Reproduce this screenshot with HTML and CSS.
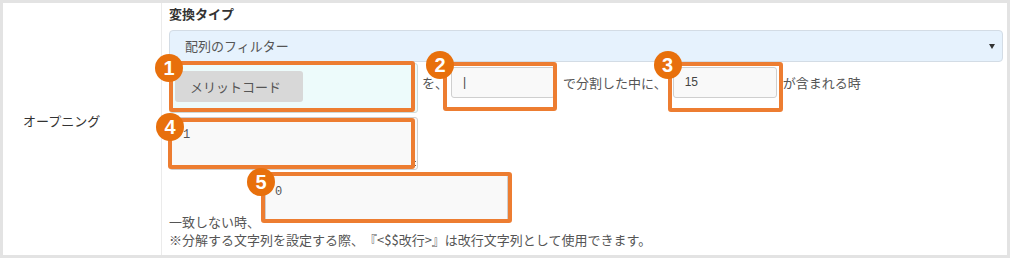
FILE: index.html
```html
<!DOCTYPE html>
<html lang="ja">
<head>
<meta charset="utf-8">
<title>変換タイプ</title>
<link rel="stylesheet" href="styles.css">
</head>
<body>
<div class="frame">
  <div class="label-cell"><span>オープニング</span></div>
  <div class="content">
    <div class="title">変換タイプ</div>
    <div class="select"><span>配列のフィルター</span><span class="caret"></span></div>
    <div class="row1">
      <div class="field f1">
        <div class="tagbox"><span class="tag">メリットコード</span></div>
        <span class="mark m1"><span class="badge b1">1</span></span>
      </div>
      <span class="txt t-wo">を、</span>
      <div class="field f2">
        <div class="inp">|</div>
        <span class="mark m2"><span class="badge b2">2</span></span>
      </div>
      <span class="txt t-split">で分割した中に、</span>
      <div class="field f3">
        <div class="inp">15</div>
        <span class="mark m3"><span class="badge b3">3</span></span>
      </div>
      <span class="txt t-inc">が含まれる時</span>
    </div>
    <div class="field f4">
      <textarea class="ta">1</textarea>
      <span class="mark m4"><span class="badge b4">4</span></span>
    </div>
    <div class="row3">
      <span class="txt">一致しない時、</span>
      <div class="field f5">
        <div class="ta5">0</div>
        <span class="mark m5"><span class="badge b5">5</span></span>
      </div>
    </div>
    <div class="note">※分解する文字列を設定する際、『&lt;$$改行&gt;』は改行文字列として使用できます。</div>
  </div>
</div>
</body>
</html>
```

FILE: styles.css
```css
html, body {
  margin: 0;
  padding: 0;
  background: #fff;
}

.frame {
  width: 1010px;
  height: 258px;
  box-sizing: border-box;
  border: 3px solid #e3e3e3;
  display: flex;
  font-family: "Noto Sans CJK JP", sans-serif;
  font-size: 13px;
  color: #555;
  background: #fff;
  text-spacing-trim: space-all;
  font-feature-settings: "chws" 0, "halt" 0, "palt" 0;
}

.label-cell {
  width: 159px;
  flex: none;
  box-sizing: border-box;
  border-right: 1px solid #ebebeb;
  display: flex;
  align-items: center;
  padding: 0 0 16px 20px;
  color: #333;
  line-height: 18px;
}

.content {
  flex: 1;
  padding: 2px 4px 0 7px;
  display: flex;
  flex-direction: column;
  align-items: flex-start;
}

.title {
  font-weight: bold;
  color: #333;
  line-height: 18px;
}

.select {
  margin-top: 7px;
  align-self: stretch;
  height: 32px;
  box-sizing: border-box;
  border: 1px solid #d3dce5;
  border-radius: 4px;
  background: #e6f2fd;
  display: flex;
  align-items: center;
  justify-content: space-between;
  padding: 0 7px 0 15px;
  line-height: 18px;
}

.caret {
  width: 0;
  height: 0;
  border-left: 3px solid transparent;
  border-right: 3px solid transparent;
  border-top: 5px solid #333;
}

.field {
  position: relative;
  flex: none;
}

.row1 {
  display: flex;
  align-items: flex-start;
  margin-top: 1px;
}

.f1 {
  width: 249px;
  height: 50px;
}

.tagbox {
  width: 100%;
  height: 100%;
  box-sizing: border-box;
  border: 1px solid #cddada;
  border-radius: 3px;
  background: #edfbfb;
  padding: 7px 0 0 5px;
}

.tag {
  display: block;
  width: 128px;
  height: 31px;
  box-sizing: border-box;
  background: #d8d8d8;
  border-radius: 3px;
  padding-left: 15px;
  line-height: 31px;
  color: #555;
}

.txt {
  line-height: 18px;
  white-space: nowrap;
}

.row1 .txt {
  margin-top: 11px;
}

.t-wo { margin-left: 4px; }
.f2 { margin-left: 3px; margin-top: 4px; }
.t-split { margin-left: 8px; }
.f3 { margin-left: 6px; margin-top: 4px; }
.t-inc { margin-left: 6px; }

.inp {
  width: 104px;
  height: 31px;
  box-sizing: border-box;
  border: 1px solid #cfcfcf;
  border-radius: 3px;
  background: #f9f9f9;
  padding-left: 11px;
  line-height: 29px;
  font-family: "Liberation Sans", sans-serif;
  font-size: 12px;
  color: #444;
}

.f4 {
  margin-top: 4px;
}

.ta {
  display: block;
  width: 249px;
  height: 53px;
  margin: 0;
  box-sizing: border-box;
  border: 1px solid #cfcfcf;
  border-radius: 3px;
  background: #f9f9f9;
  padding: 9px 13px;
  font: 12px/16px "Liberation Mono", monospace;
  color: #555;
  resize: vertical;
  outline: none;
}

.row3 {
  display: flex;
  align-items: flex-end;
  margin-top: 4px;
}

.f5 {
  margin-left: 5px;
  margin-bottom: 9px;
}

.ta5 {
  width: 243px;
  height: 48px;
  box-sizing: border-box;
  border: 1px solid #cfcfcf;
  border-radius: 3px;
  background: #f9f9f9;
  padding: 9px 9px;
  font: 12px/16px "Liberation Mono", monospace;
  color: #555;
}

.note {
  line-height: 18px;
  white-space: nowrap;
}

/* annotation overlays */
.mark {
  position: absolute;
  box-sizing: border-box;
  border: 4px solid #ed7d31;
  border-radius: 3px;
  pointer-events: none;
}

.m1 { top: -2px; left: 0; right: 3px; bottom: 1px; }
.m2 { top: -5px; left: -8px; right: -2px; bottom: -13px; }
.m3 { top: -5px; left: -5px; right: -6px; bottom: -14px; }
.m4 { top: 1px; left: -1px; right: 3px; bottom: 1px; }
.m5 { top: -2px; left: -4px; right: -4px; bottom: -1px; }

.badge {
  position: absolute;
  width: 28px;
  height: 28px;
  border-radius: 50%;
  background: #e8700c;
  color: #fff;
  font: bold 20px/28px "Liberation Sans", sans-serif;
  text-align: center;
}

.b1 { left: -18px; top: -11px; }
.b2 { left: -21px; top: -15px; }
.b3 { left: -18px; top: -15px; }
.b4 { left: -16px; top: -9px; }
.b5 { left: -18px; top: -8px; }
```
